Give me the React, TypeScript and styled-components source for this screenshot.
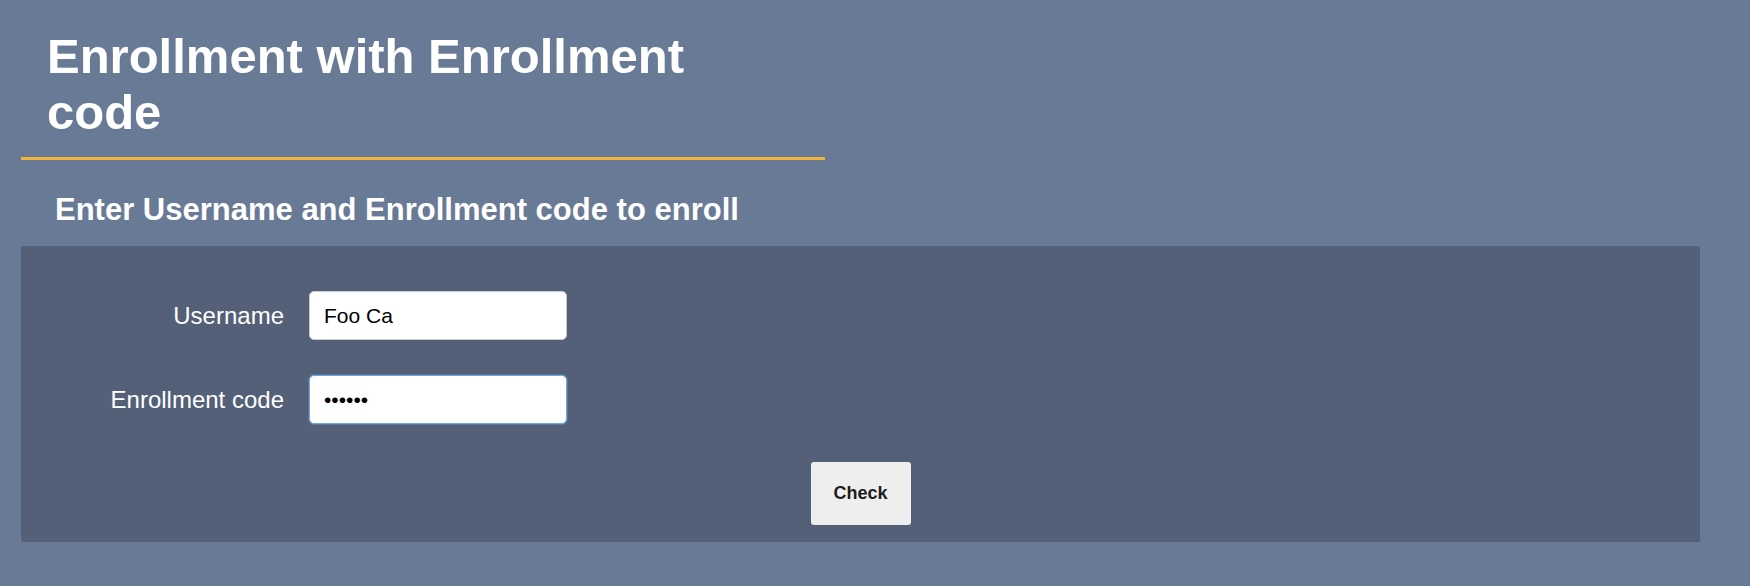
import React from "react";
import styled, { createGlobalStyle } from "styled-components";

const GlobalStyle = createGlobalStyle`
  html, body {
    margin: 0;
    padding: 0;
    background: #697a96;
    font-family: "Liberation Sans", Arial, Helvetica, sans-serif;
  }
`;

const Page = styled.div`
  min-height: 586px;
  padding: 28px 50px 0 21px;
  box-sizing: border-box;
  background: #697a96;
`;

const Header = styled.header`
  width: 804px;
  padding: 0 60px 17px 26px;
  box-sizing: border-box;
  border-bottom: 3.5px solid #f2b33d;
`;

const Title = styled.h1`
  margin: 0;
  font-size: 49px;
  line-height: 56px;
  font-weight: 700;
  color: #ffffff;
`;

const SubTitle = styled.h2`
  margin: 30px 0 16px;
  padding-left: 34px;
  font-size: 31px;
  line-height: 40px;
  font-weight: 700;
  color: #ffffff;
`;

const Panel = styled.form`
  display: flex;
  flex-direction: column;
  align-items: center;
  height: 296px;
  box-sizing: border-box;
  padding: 45px 0 17px;
  background: #536078;
  border-radius: 2px;
`;

const Fields = styled.div`
  align-self: flex-start;
  display: grid;
  grid-template-columns: 263px 258px;
  column-gap: 25px;
  row-gap: 35px;
  align-items: center;
`;

const Label = styled.label`
  text-align: right;
  font-size: 24px;
  color: #ffffff;
`;

const Input = styled.input<{ $focused?: boolean }>`
  width: 258px;
  height: 49px;
  box-sizing: border-box;
  padding: 0 14px;
  font-family: "Liberation Sans", Arial, Helvetica, sans-serif;
  font-size: 21px;
  color: #000000;
  background: #ffffff;
  border: 1px solid ${(p) => (p.$focused ? "#6aa6e0" : "#c9ccd2")};
  border-radius: 5px;
  outline: none;
  box-shadow: ${(p) => (p.$focused ? "0 0 0 1px rgba(106,166,224,0.35)" : "none")};
`;

const CheckButton = styled.button`
  margin-top: 38px;
  width: 100px;
  height: 64px;
  background: #eeeeee;
  color: #1c1c1c;
  border: none;
  border-radius: 3px;
  font-family: "Liberation Sans", Arial, Helvetica, sans-serif;
  font-size: 18px;
  font-weight: 700;
  cursor: pointer;
`;

export default function App() {
  return (
    <>
      <GlobalStyle />
      <Page>
        <Header>
          <Title>Enrollment with Enrollment code</Title>
        </Header>
        <SubTitle>Enter Username and Enrollment code to enroll</SubTitle>
        <Panel onSubmit={(e) => e.preventDefault()}>
          <Fields>
            <Label htmlFor="username">Username</Label>
            <Input id="username" type="text" defaultValue="Foo Ca" />
            <Label htmlFor="code">Enrollment code</Label>
            <Input id="code" type="password" defaultValue="123456" $focused />
          </Fields>
          <CheckButton type="submit">Check</CheckButton>
        </Panel>
      </Page>
    </>
  );
}
